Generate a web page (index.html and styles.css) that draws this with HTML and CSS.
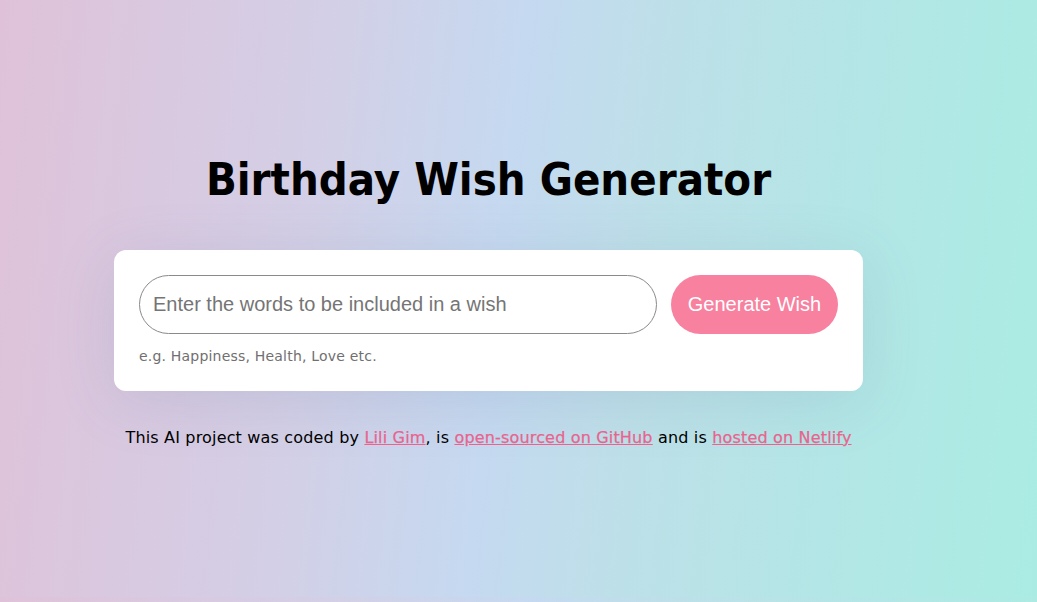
FILE: index.html
```html
<!DOCTYPE html>
<html lang="en">
<head>
<meta charset="utf-8">
<title>Birthday Wish Generator</title>
<link rel="stylesheet" href="styles.css">
</head>
<body>
<div class="page">
  <main class="container">
    <h1 class="title">Birthday Wish Generator</h1>
    <form class="card">
      <div class="row">
        <input class="field" type="text" placeholder="Enter the words to be included in a wish">
        <button class="btn" type="button">Generate Wish</button>
      </div>
      <p class="hint">e.g. Happiness, Health, Love etc.</p>
    </form>
    <footer class="footer">
      This AI project was coded by <a href="#">Lili Gim</a>, is <a href="#">open-sourced on GitHub</a> and is <a href="#">hosted on Netlify</a>
    </footer>
  </main>
</div>
</body>
</html>
```
FILE: styles.css
```css
html {
  margin: 0;
  background: linear-gradient(96deg, #dfc2d9 0%, #d3cfe6 30%, #c5d9f0 48%, #bde0e8 62%, #b3e6e6 80%, #aaece3 100%);
  background-size: 100% 597px;
}
body {
  margin: 0;
  font-family: "DejaVu Sans", sans-serif;
  color: #000;
}
.page {
  display: flex;
  justify-content: center;
  padding: 158px 60px 0 0;
  min-height: 597px;
  box-sizing: border-box;
}
.container {
  width: 749px;
  display: flex;
  flex-direction: column;
  align-items: center;
}
.title {
  margin: 0 0 48px;
  font-family: "DejaVu Sans Condensed", "DejaVu Sans", sans-serif;
  font-size: 45px;
  font-weight: bold;
  line-height: 44px;
}
.card {
  align-self: stretch;
  background: #fff;
  border-radius: 12px;
  padding: 25px 25px 27px;
  box-shadow: 0 10px 60px rgba(90, 110, 150, 0.15);
}
.row {
  display: flex;
  gap: 14px;
}
.field {
  flex: 1;
  height: 59px;
  box-sizing: border-box;
  border: 1px solid #8a8a8a;
  border-radius: 30px;
  padding: 0 13px;
  font-family: "Liberation Sans", Arial, sans-serif;
  font-size: 20px;
  color: #333;
  background: #fff;
  outline: none;
}
.field::placeholder {
  color: #757575;
}
.btn {
  width: 167px;
  height: 59px;
  border: none;
  border-radius: 30px;
  background: #f7819f;
  color: #fff;
  font-family: "Liberation Sans", Arial, sans-serif;
  font-size: 20px;
  cursor: pointer;
}
.hint {
  margin: 14px 0 0;
  font-size: 14px;
  line-height: 16px;
  color: #707070;
  letter-spacing: 0.2px;
}
.footer {
  margin-top: 37px;
  font-size: 16px;
  line-height: 20px;
  letter-spacing: 0.17px;
  white-space: nowrap;
}
.footer a {
  color: #e8648e;
  font-weight: 500;
  text-decoration: underline;
  -webkit-text-stroke: 0.25px #e8648e;
}
```
